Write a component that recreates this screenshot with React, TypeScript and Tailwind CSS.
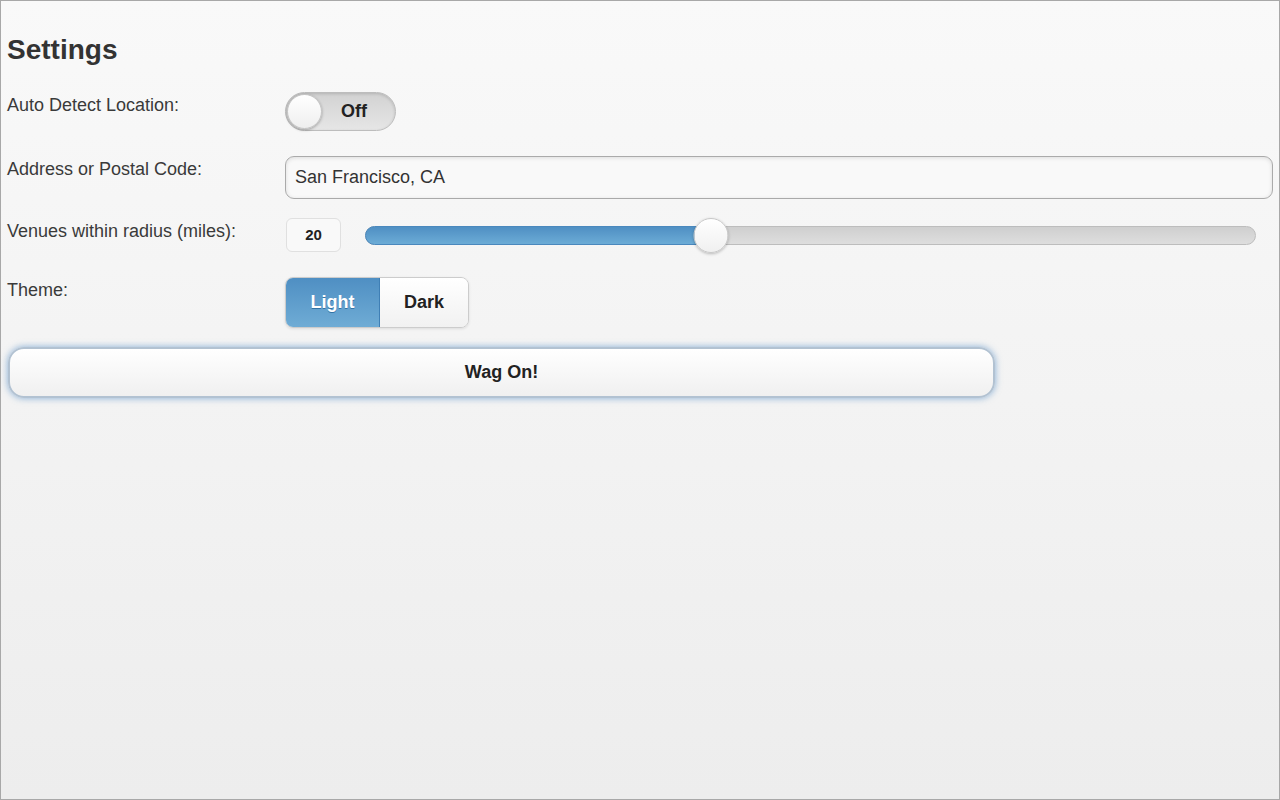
import { useState } from 'react';

const FONT = "font-['Liberation_Sans',Arial,sans-serif]";

function Field({ label, children }: { label: string; children: React.ReactNode }) {
  return (
    <div className="flex items-start">
      <label className="w-[278px] shrink-0 pt-[2px] text-[18px] leading-[22px] text-[#3a3a3a]">{label}</label>
      <div className="flex-1">{children}</div>
    </div>
  );
}

export default function App() {
  const [autoDetect, setAutoDetect] = useState(false);
  const [address, setAddress] = useState('San Francisco, CA');
  const [radius, setRadius] = useState(20);
  const [theme, setTheme] = useState<'light' | 'dark'>('light');

  const pct = ((radius - 1) / (50 - 1)) * 100;

  return (
    <div
      className={`${FONT} h-[800px] w-[1280px] border border-[#a8a8a8] bg-gradient-to-b from-[#f9f9f9] to-[#ededed] px-[6px] text-[#333]`}
    >
      <h2 className="mt-[32px] text-[28px] font-bold leading-[34px] text-[#333]">Settings</h2>

      <div className="mt-[25px]">
        <Field label="Auto Detect Location:">
          <button
            type="button"
            onClick={() => setAutoDetect((v) => !v)}
            className="relative flex h-[39px] w-[111px] items-center rounded-full border border-[#bdbdbd] bg-gradient-to-b from-[#d2d2d2] to-[#e6e6e6] shadow-[inset_0_1px_3px_rgba(0,0,0,0.15)]"
          >
            <span className="absolute left-[1px] top-[1px] h-[35px] w-[35px] rounded-full border border-[#c4c4c4] bg-gradient-to-b from-white to-[#efefef] shadow-[0_1px_3px_rgba(0,0,0,0.3)]" />
            <span className="ml-[44px] w-[48px] text-center text-[18px] font-bold text-[#222]">
              {autoDetect ? 'On' : 'Off'}
            </span>
          </button>
        </Field>
      </div>

      <div className="mt-[25px]">
        <Field label="Address or Postal Code:">
          <input
            value={address}
            onChange={(e) => setAddress(e.target.value)}
            className="h-[43px] w-[988px] rounded-[9px] border border-[#aaaaaa] bg-[#f9f9f9] px-[9px] text-[18px] text-[#333] shadow-[inset_0_1px_4px_rgba(0,0,0,0.12)] outline-none"
          />
        </Field>
      </div>

      <div className="mt-[19px]">
        <Field label="Venues within radius (miles):">
          <div className="flex items-center">
            <div className="ml-[1px] flex h-[34px] w-[55px] items-center justify-center rounded-[6px] border border-[#e0e0e0] bg-[#f9f9f9] text-[15px] font-bold text-[#222]">
              {radius}
            </div>
            <div
              className="relative ml-[24px] h-[19px] w-[891px] cursor-pointer rounded-full border border-[#bdbdbd] bg-gradient-to-b from-[#cfcfcf] to-[#dedede]"
              onClick={(e) => {
                const r = e.currentTarget.getBoundingClientRect();
                const v = Math.round(1 + ((e.clientX - r.left) / r.width) * 49);
                setRadius(Math.min(50, Math.max(1, v)));
              }}
            >
              <div
                className="absolute -left-px -top-px h-[19px] rounded-l-full border border-[#4a88bd] bg-gradient-to-b from-[#4f8fc3] to-[#6cacd6]"
                style={{ width: `${pct}%` }}
              />
              <div
                className="absolute top-[-9px] h-[35px] w-[35px] -translate-x-1/2 rounded-full border border-[#c8c8c8] bg-gradient-to-b from-white to-[#f0f0f0] shadow-[0_1px_3px_rgba(0,0,0,0.25)]"
                style={{ left: `${pct}%` }}
              />
            </div>
          </div>
        </Field>
      </div>

      <div className="mt-[25px]">
        <Field label="Theme:">
          <div className="flex h-[51px] w-[184px] overflow-hidden rounded-[8px] border border-[#cccccc] shadow-[0_1px_3px_rgba(0,0,0,0.1)]">
            <button
              type="button"
              onClick={() => setTheme('light')}
              className={`w-[94px] text-[18px] font-bold ${
                theme === 'light'
                  ? 'border-r border-[#3f7fb5] bg-gradient-to-b from-[#4f8fc3] to-[#6facd5] text-white [text-shadow:0_1px_0_#3373a5]'
                  : 'border-r border-[#cccccc] bg-gradient-to-b from-white to-[#f1f1f1] text-[#222]'
              }`}
            >
              Light
            </button>
            <button
              type="button"
              onClick={() => setTheme('dark')}
              className={`flex-1 text-[18px] font-bold ${
                theme === 'dark'
                  ? 'bg-gradient-to-b from-[#4f8fc3] to-[#6facd5] text-white [text-shadow:0_1px_0_#3373a5]'
                  : 'bg-gradient-to-b from-white to-[#f1f1f1] text-[#222]'
              }`}
            >
              Dark
            </button>
          </div>
        </Field>
      </div>

      <button
        type="button"
        className="ml-[1px] mt-[19px] h-[51px] w-[987px] rounded-[16px] border-2 border-[#b2c2d2] bg-gradient-to-b from-white to-[#f0f0f0] text-[18px] font-bold text-[#222] shadow-[0_0_7px_rgba(56,123,190,0.6)]"
      >
        Wag On!
      </button>
    </div>
  );
}
